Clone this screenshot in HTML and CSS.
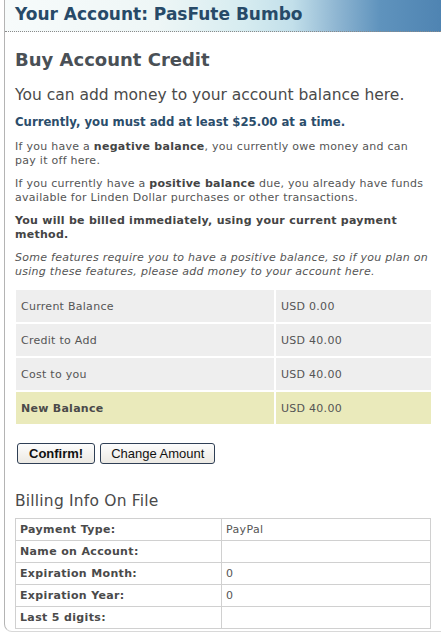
FILE: index.html
```html
<!DOCTYPE html>
<html>
<head>
<meta charset="utf-8">
<link rel="stylesheet" href="styles.css">
</head>
<body>
<div class="frame">
  <div class="header"><h1>Your Account: PasFute Bumbo</h1></div>
  <div class="content">
    <h2>Buy Account Credit</h2>
    <p class="lead">You can add money to your account balance here.</p>
    <p class="notice">Currently, you must add at least $25.00 at a time.</p>
    <p class="first">If you have a <b>negative balance</b>, you currently owe money and can<br>pay it off here.</p>
    <p>If you currently have a <b>positive balance</b> due, you already have funds<br>available for Linden Dollar purchases or other transactions.</p>
    <p class="billed">You will be billed immediately, using your current payment method.</p>
    <p class="note">Some features require you to have a positive balance, so if you plan on using these features, please add money to your account here.</p>
    <table class="summary">
      <tr><td>Current Balance</td><td>USD 0.00</td></tr>
      <tr><td>Credit to Add</td><td>USD 40.00</td></tr>
      <tr><td>Cost to you</td><td>USD 40.00</td></tr>
      <tr class="total"><td>New Balance</td><td>USD 40.00</td></tr>
    </table>
    <div class="buttons">
      <button class="btn btn-primary">Confirm!</button>
      <button class="btn btn-secondary">Change Amount</button>
    </div>
    <h3>Billing Info On File</h3>
    <table class="billing">
      <tr><th>Payment Type:</th><td>PayPal</td></tr>
      <tr><th>Name on Account:</th><td></td></tr>
      <tr><th>Expiration Month:</th><td>0</td></tr>
      <tr><th>Expiration Year:</th><td>0</td></tr>
      <tr><th>Last 5 digits:</th><td></td></tr>
    </table>
  </div>
</div>
</body>
</html>
```
FILE: styles.css
```css
html, body {
  margin: 0;
  padding: 0;
  background: #fff;
}
body {
  font-family: "DejaVu Sans", Verdana, sans-serif;
  color: #4d4d4d;
  width: 441px;
  height: 638px;
  overflow: hidden;
}
.frame {
  margin-left: 4px;
  border-left: 1px solid #b4b4b4;
  border-bottom: 1px solid #d8d8d8;
  border-bottom-left-radius: 8px;
  height: 632px;
  box-sizing: border-box;
}
.header {
  height: 32px;
  box-sizing: border-box;
  border-bottom: 1px dotted #8a8a8a;
  background: linear-gradient(90deg, #f7fbfb 0%, #eef6f6 35%, #d6ecf0 55%, #c2dfea 66%, #8fb6d2 76%, #5f93bd 86%, #4f84b2 100%);
  padding: 3px 0 0 10px;
}
.header h1 {
  margin: 0;
  font-size: 17px;
  line-height: 22px;
  font-weight: bold;
  color: #274a68;
  letter-spacing: 0;
}
.content {
  padding: 0 9px 0 10px;
}
h2 {
  margin: 17px 0 0;
  font-size: 18px;
  line-height: 22px;
  font-weight: bold;
  color: #4a5056;
}
.lead {
  margin: 15px 0 0;
  font-size: 15.5px;
  line-height: 18px;
  color: #4a4a4a;
  letter-spacing: 0;
}
.notice {
  margin: 11px 0 0;
  font-size: 11.7px;
  line-height: 14px;
  font-weight: bold;
  color: #2b4d6b;
  letter-spacing: 0;
}
p {
  margin: 9px 0 0;
  font-size: 11px;
  line-height: 14px;
  letter-spacing: 0.27px;
  color: #555;
}
p.first { margin-top: 11px; }
p b { color: #444; }
.billed {
  font-weight: bold;
  color: #444;
}
.note {
  font-style: italic;
}
.summary {
  margin-top: 9px;
  width: 419px;
  border-collapse: separate;
  border-spacing: 2px;
  margin-left: -1px;
  font-size: 11px;
  letter-spacing: 0.27px;
  color: #555;
}
.summary td {
  background: #eeeeee;
  height: 32px;
  padding: 0 0 0 5px;
}
.summary td:first-child { width: 253px; }
.summary .total td { background: #eaeabb; }
.summary .total td:first-child { font-weight: bold; color: #4a4a4a; }
.buttons {
  margin-top: 17px;
  display: flex;
  gap: 5px;
  padding-left: 2px;
}
.btn {
  font-family: "Liberation Sans", Arial, sans-serif;
  font-size: 13px;
  color: #111;
  background: linear-gradient(#fdfdfd, #ece9e3);
  border: 1px solid #2f3f55;
  border-radius: 3px;
  height: 21px;
  padding: 0 10px;
}
.btn-primary { font-weight: bold; padding: 0 11px; }
h3 {
  margin: 28px 0 0;
  font-size: 15.5px;
  line-height: 18px;
  font-weight: normal;
  color: #4a4a4a;
  letter-spacing: 0.2px;
}
.billing {
  margin-top: 8px;
  width: 416px;
  border-collapse: collapse;
  font-size: 11px;
  letter-spacing: 0.35px;
  border: 1px solid #c8c8c8;
}
.billing th, .billing td {
  border: 1px solid #d0d0d0;
  height: 21px;
  padding: 0 0 0 4px;
  text-align: left;
}
.billing th {
  width: 201px;
  font-weight: bold;
  color: #4a4a4a;
}
.billing td { color: #555; }
```
